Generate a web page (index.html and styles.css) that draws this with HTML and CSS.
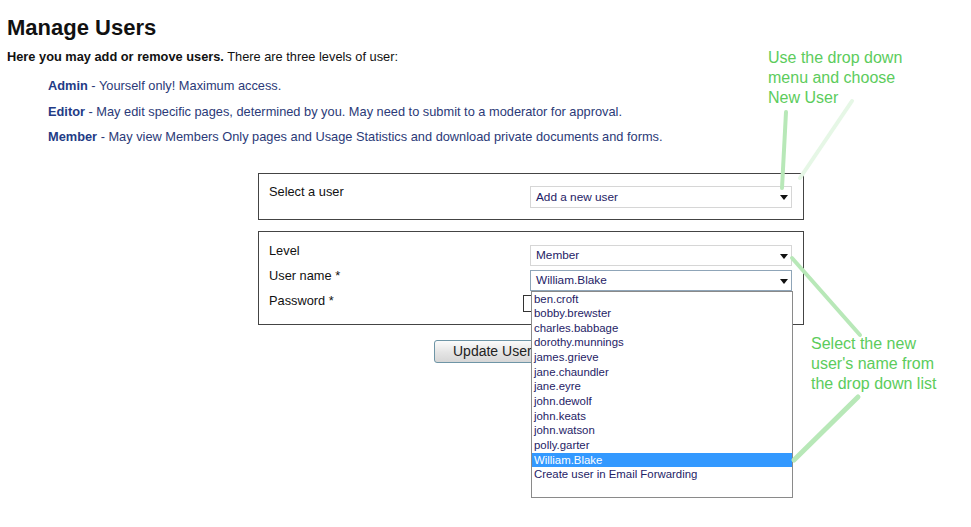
FILE: index.html
```html
<!DOCTYPE html>
<html>
<head>
<meta charset="utf-8">
<link rel="stylesheet" href="styles.css">
</head>
<body>
<div class="page">
  <h1 class="title">Manage Users</h1>
  <p class="intro"><b>Here you may add or remove users.</b> There are three levels of user:</p>
  <ul class="levels">
    <li><b>Admin</b> - Yourself only! Maximum access.</li>
    <li><b>Editor</b> - May edit specific pages, determined by you. May need to submit to a moderator for approval.</li>
    <li><b>Member</b> - May view Members Only pages and Usage Statistics and download private documents and forms.</li>
  </ul>

  <div class="box box-select">
    <div class="row">
      <span class="label">Select a user</span>
      <div class="select"><span>Add a new user</span><i class="arrow"></i></div>
    </div>
  </div>

  <div class="box box-details">
    <div class="row">
      <span class="label">Level</span>
      <div class="select"><span>Member</span><i class="arrow"></i></div>
    </div>
    <div class="row">
      <span class="label">User name *</span>
      <div class="select select-open"><span>William.Blake</span><i class="arrow"></i>
        <ul class="listbox">
          <li>ben.croft</li>
          <li>bobby.brewster</li>
          <li>charles.babbage</li>
          <li>dorothy.munnings</li>
          <li>james.grieve</li>
          <li>jane.chaundler</li>
          <li>jane.eyre</li>
          <li>john.dewolf</li>
          <li>john.keats</li>
          <li>john.watson</li>
          <li>polly.garter</li>
          <li class="selected">William.Blake</li>
          <li>Create user in Email Forwarding</li>
        </ul>
      </div>
    </div>
    <div class="row">
      <span class="label">Password *</span>
      <div class="input"></div>
    </div>
  </div>

  <div class="actions">
    <button class="btn">Update User</button>
  </div>

  <svg class="callout-lines" width="971" height="527" viewBox="0 0 971 527">
    <line x1="786" y1="112" x2="782" y2="188" stroke="#b8e8b8" stroke-width="4" stroke-linecap="round"/>
    <line x1="852" y1="101" x2="800" y2="178" stroke="#e6f7e6" stroke-width="4" stroke-linecap="round"/>
    <line x1="792" y1="258" x2="860" y2="335" stroke="#b8e8b8" stroke-width="4" stroke-linecap="round"/>
    <line x1="858" y1="397" x2="794" y2="460" stroke="#b8e8b8" stroke-width="5" stroke-linecap="round"/>
  </svg>
  <div class="note note-top">Use the drop down<br>menu and choose<br>New User</div>
  <div class="note note-bottom">Select the new<br>user's name from<br>the drop down list</div>
</div>
</body>
</html>
```
FILE: styles.css
```css
* { box-sizing: border-box; }
html, body { margin: 0; padding: 0; background: #fff; }
body {
  font-family: "Liberation Sans", Arial, sans-serif;
  color: #111;
  width: 971px;
  height: 527px;
  overflow: hidden;
}
.page {
  position: relative;
  width: 971px;
  height: 527px;
  padding: 15px 0 0 7px;
}
.title {
  margin: 0;
  font-size: 22px;
  line-height: 26px;
  font-weight: bold;
  color: #111;
}
.intro {
  margin: 9px 0 0 0;
  font-size: 12.8px;
  line-height: 14px;
  color: #111;
}
.levels {
  list-style: none;
  margin: 9px 0 0 41px;
  padding: 0;
  font-size: 12.8px;
  line-height: 25.5px;
  color: #2b3a78;
}
.levels b { color: #233b86; }
.box {
  margin-left: 251px;
  width: 546px;
  border: 1px solid #444;
  padding: 12px 11px 11px 10px;
}
.box-select { margin-top: 23px; height: 47px; }
.box-details { margin-top: 11px; height: 94px; padding-top: 13px; }
.row {
  display: grid;
  grid-template-columns: 261px 262px;
  align-items: start;
  height: 25px;
}
.box-select .row { height: 22px; }
.label {
  font-size: 12.8px;
  line-height: 14px;
  margin-top: -1px;
  color: #111;
}
.select {
  position: relative;
  height: 21px;
  border: 1px solid #d6d6d6;
  background: #fff;
  font-size: 11.8px;
  line-height: 19px;
  color: #1e2266;
  padding-left: 5px;
}
.box-select .select { height: 22px; line-height: 20px; }
.select-open { border-color: #8fa5b8; }
.arrow {
  position: absolute;
  right: 3px;
  top: 8px;
  width: 0;
  height: 0;
  border-left: 4px solid transparent;
  border-right: 4px solid transparent;
  border-top: 5px solid #111;
}
.input {
  margin-left: -7px;
  width: 40px;
  height: 17px;
  margin-top: 0;
  border: 1px solid #333;
  background: #fff;
}
.listbox {
  position: absolute;
  z-index: 3;
  left: 0;
  top: 20px;
  width: 262px;
  height: 207px;
  margin: 0;
  padding: 0;
  list-style: none;
  background: #fff;
  border: 1px solid #8a8a8a;
  font-size: 11.4px;
  line-height: 14.67px;
  color: #1e2266;
}
.listbox li { padding-left: 2px; height: 14.67px; }
.listbox li.selected { background: #3399ff; color: #fff; }
.actions { margin: 15px 0 0 427px; }
.btn {
  width: 120px;
  height: 23px;
  padding: 0 0 0 18px;
  text-align: left;
  font-family: "Liberation Sans", Arial, sans-serif;
  font-size: 14px;
  color: #222;
  border: 1px solid #6e95a6;
  border-radius: 3px;
  background: linear-gradient(#fbfbfb, #e4e4e4 55%, #d6d6d6);
}
.callout-lines {
  position: absolute;
  left: 0;
  top: 0;
  z-index: 4;
  pointer-events: none;
}
.note {
  position: absolute;
  z-index: 5;
  font-size: 16px;
  line-height: 20px;
  color: #5ccc5c;
}
.note-top { left: 768px; top: 48px; }
.note-bottom { left: 811px; top: 334px; }
```
